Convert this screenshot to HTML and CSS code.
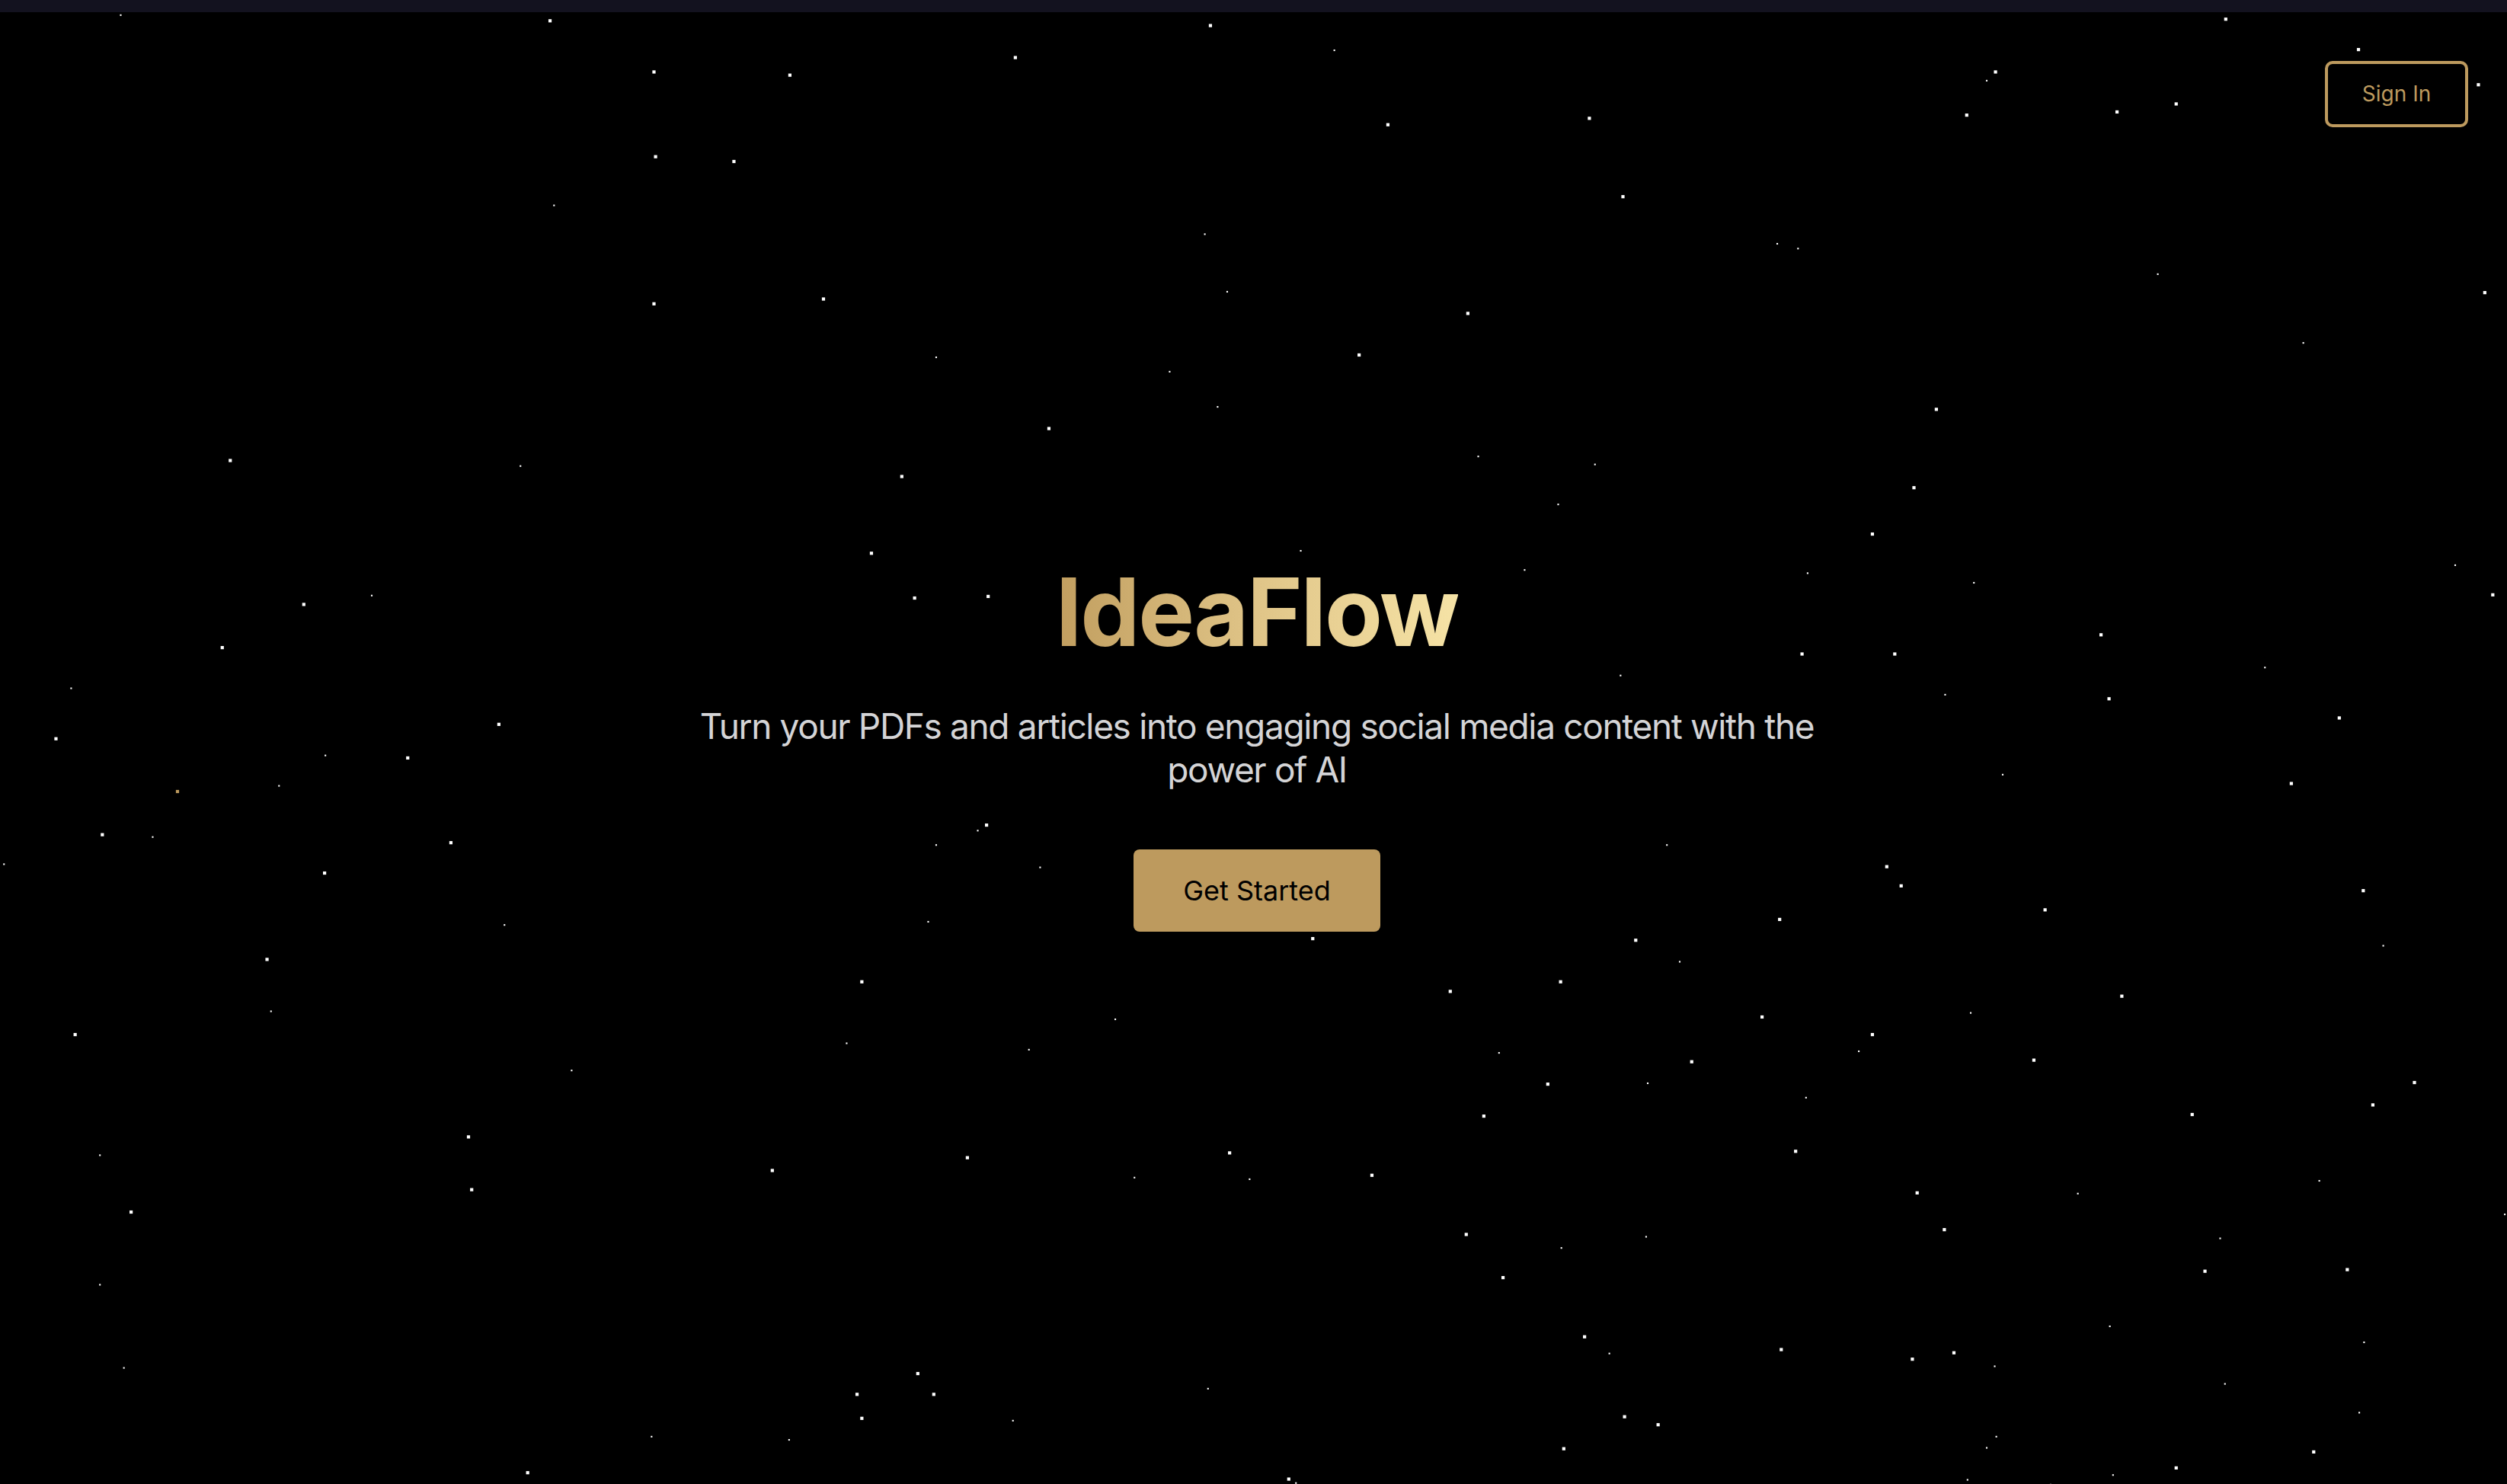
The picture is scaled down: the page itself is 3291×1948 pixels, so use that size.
FILE: index.html
```html
<!DOCTYPE html>
<html lang="en">
<head>
<meta charset="utf-8">
<title>IdeaFlow</title>
<link rel="stylesheet" href="styles.css">
</head>
<body>
<div class="page">
  <div class="sky" aria-hidden="true">
    <span class="stars stars-lg"></span>
    <span class="stars stars-sm"></span>
  </div>
  <div class="topbar"></div>
  <main class="stage">
    <header class="header">
      <button class="signin">Sign In</button>
    </header>
    <section class="hero">
      <h1 class="title">IdeaFlow</h1>
      <p class="subtitle">Turn your PDFs and articles into engaging social media content with the power of AI</p>
      <button class="cta">Get Started</button>
    </section>
  </main>
</div>
</body>
</html>
```

FILE: styles.css
```css
html, body {
  margin: 0;
  padding: 0;
  background: #000;
  overflow: hidden;
}

body {
  font-family: Inter, "Noto Sans", "Liberation Sans", sans-serif;
}

.page {
  display: grid;
  grid-template-rows: 16px 1fr;
  grid-template-columns: 1fr;
  height: 100vh;
  overflow: hidden;
}

.sky {
  grid-row: 1 / 3;
  grid-column: 1;
  z-index: 0;
  overflow: hidden;
}

.stars {
  display: block;
  transform-origin: 0 0;
  transform: scale(2.099);
  background: transparent;
}

.stars-lg {
  width: 1.9px;
  height: 1.9px;
  box-shadow:
    343px 12px #fff, 756px 15px #fff, 1391px 11px #fff, 634px 35px #fff, 408px 44px #fff,
    493px 46px #fff, 1247px 44px #fff, 1474px 30px #fff, 1549px 52px #fff, 1229px 71px #fff,
    1323px 69px #fff, 1360px 64px #fff, 993px 73px #fff, 867px 77px #fff, 409px 97px #fff,
    458px 100px #fff, 1014px 122px #fff, 408px 189px #fff, 514px 186px #fff, 917px 195px #fff,
    1553px 182px #fff, 849px 221px #fff, 1210px 255px #fff, 655px 267px #fff, 143px 287px #fff,
    563px 297px #fff, 1196px 304px #fff, 1170px 333px #fff, 544px 345px #fff, 1558px 371px #fff,
    189px 377px #fff, 571px 373px #fff, 617px 372px #fff, 138px 404px #fff, 1126px 408px #fff,
    1184px 408px #fff, 1313px 396px #fff, 1318px 436px #fff, 311px 452px #fff, 34px 461px #fff,
    1462px 448px #fff, 254px 473px #fff, 1432px 489px #fff, 63px 521px #fff, 281px 526px #fff,
    616px 515px #fff, 202px 545px #fff, 1179px 541px #fff, 1188px 553px #fff, 1477px 556px #fff,
    1278px 568px #fff, 1112px 574px #fff, 1022px 587px #fff, 820px 586px #fff, 166px 599px #fff,
    538px 613px #fff, 975px 613px #fff, 906px 619px #fff, 1326px 622px #fff, 46px 646px #fff,
    1101px 635px #fff, 1170px 646px #fff, 1057px 663px #fff, 1271px 662px #fff, 967px 677px #fff,
    1509px 676px #fff, 1483px 690px #fff, 927px 697px #fff, 1370px 696px #fff, 292px 710px #fff,
    604px 723px #fff, 768px 720px #fff, 1122px 719px #fff, 482px 731px #fff, 857px 734px #fff,
    294px 743px #fff, 1198px 745px #fff, 81px 757px #fff, 1215px 768px #fff, 916px 771px #fff,
    1467px 793px #fff, 939px 798px #fff, 1378px 794px #fff, 990px 835px #fff, 1113px 843px #fff,
    1195px 849px #fff, 1221px 845px #fff, 573px 858px #fff, 583px 871px #fff, 535px 871px #fff,
    1015px 885px #fff, 1036px 890px #fff, 538px 886px #fff, 977px 905px #fff, 1446px 907px #fff,
    329px 920px #fff, 805px 924px #fff, 1360px 917px #fff, 110px 494px #bd9a5e;
}

.stars-sm {
  width: 1px;
  height: 1px;
  box-shadow:
    75px 8px #fff, 834px 30px #fff, 1242px 49px #fff, 346px 127px #fff, 753px 145px #fff,
    1111px 151px #fff, 1124px 154px #fff, 1349px 170px #fff, 767px 181px #fff, 1440px 213px #fff,
    585px 222px #fff, 731px 231px #fff, 761px 253px #fff, 325px 290px #fff, 997px 289px #fff,
    924px 284px #fff, 974px 314px #fff, 813px 343px #fff, 953px 355px #fff, 1535px 352px #fff,
    1130px 357px #fff, 1234px 363px #fff, 232px 371px #fff, 1416px 416px #fff, 44px 429px #fff,
    1013px 421px #fff, 1216px 433px #fff, 203px 471px #fff, 174px 490px #fff, 1252px 483px #fff,
    95px 522px #fff, 611px 518px #fff, 585px 527px #fff, 1042px 527px #fff, 2px 539px #fff,
    650px 541px #fff, 580px 575px #fff, 315px 577px #fff, 1050px 600px #fff, 1490px 590px #fff,
    169px 631px #fff, 697px 636px #fff, 1232px 632px #fff, 1162px 656px #fff, 529px 651px #fff,
    643px 655px #fff, 937px 657px #fff, 357px 668px #fff, 1030px 676px #fff, 1129px 685px #fff,
    62px 721px #fff, 709px 735px #fff, 781px 736px #fff, 1450px 737px #fff, 1299px 745px #fff,
    976px 779px #fff, 1388px 773px #fff, 1029px 772px #fff, 1566px 758px #fff, 62px 802px #fff,
    1319px 828px #fff, 1006px 845px #fff, 1478px 838px #fff, 1247px 853px #fff, 77px 854px #fff,
    755px 867px #fff, 1391px 864px #fff, 633px 887px #fff, 1475px 882px #fff, 407px 897px #fff,
    493px 899px #fff, 1248px 897px #fff, 1242px 904px #fff, 810px 926px #fff, 1321px 921px #fff,
    1230px 924px #fff, 1282px 927px #fff;
}

.topbar {
  grid-row: 1;
  grid-column: 1;
  z-index: 1;
  background: #13121f;
}

.stage {
  grid-row: 2;
  grid-column: 1;
  z-index: 1;
  display: grid;
  grid-template-columns: 1fr;
  grid-template-rows: 1fr;
}

.header {
  grid-row: 1;
  grid-column: 1;
  align-self: start;
  display: flex;
  justify-content: flex-end;
  padding: 64px 51px 0 0;
  z-index: 2;
}

.signin {
  box-sizing: border-box;
  font-family: Inter, "Noto Sans", "Liberation Sans", sans-serif;
  font-size: 28px;
  line-height: 39px;
  white-space: nowrap;
  color: #bd9a5e;
  background: transparent;
  border: 4px solid #bd9a5e;
  border-radius: 10px;
  padding: 20px 0;
  width: 188px;
  height: 87px;
  text-align: center;
  cursor: pointer;
}

.hero {
  grid-row: 1;
  grid-column: 1;
  align-self: center;
  display: flex;
  flex-direction: column;
  align-items: center;
  text-align: center;
  padding-left: 9px;
}

.title {
  margin: 0;
  font-size: 124px;
  line-height: 124px;
  font-weight: 700;
  letter-spacing: -2.2px;
  background: linear-gradient(90deg, #c19e5f 0%, #e0c588 50%, #f6e3a6 100%);
  -webkit-background-clip: text;
  background-clip: text;
  color: transparent;
}

.subtitle {
  margin: 60px 0 0;
  max-width: 1536px;
  font-size: 46px;
  line-height: 57px;
  letter-spacing: -1.35px;
  color: #d4d4d6;
  font-weight: 400;
}

.cta {
  box-sizing: border-box;
  margin-top: 76px;
  font-family: Inter, "Noto Sans", "Liberation Sans", sans-serif;
  font-size: 36px;
  line-height: 44px;
  padding: 32px 0;
  width: 324px;
  height: 108px;
  color: #000;
  background: #bd9a5e;
  border: none;
  border-radius: 8px;
  cursor: pointer;
}
```
